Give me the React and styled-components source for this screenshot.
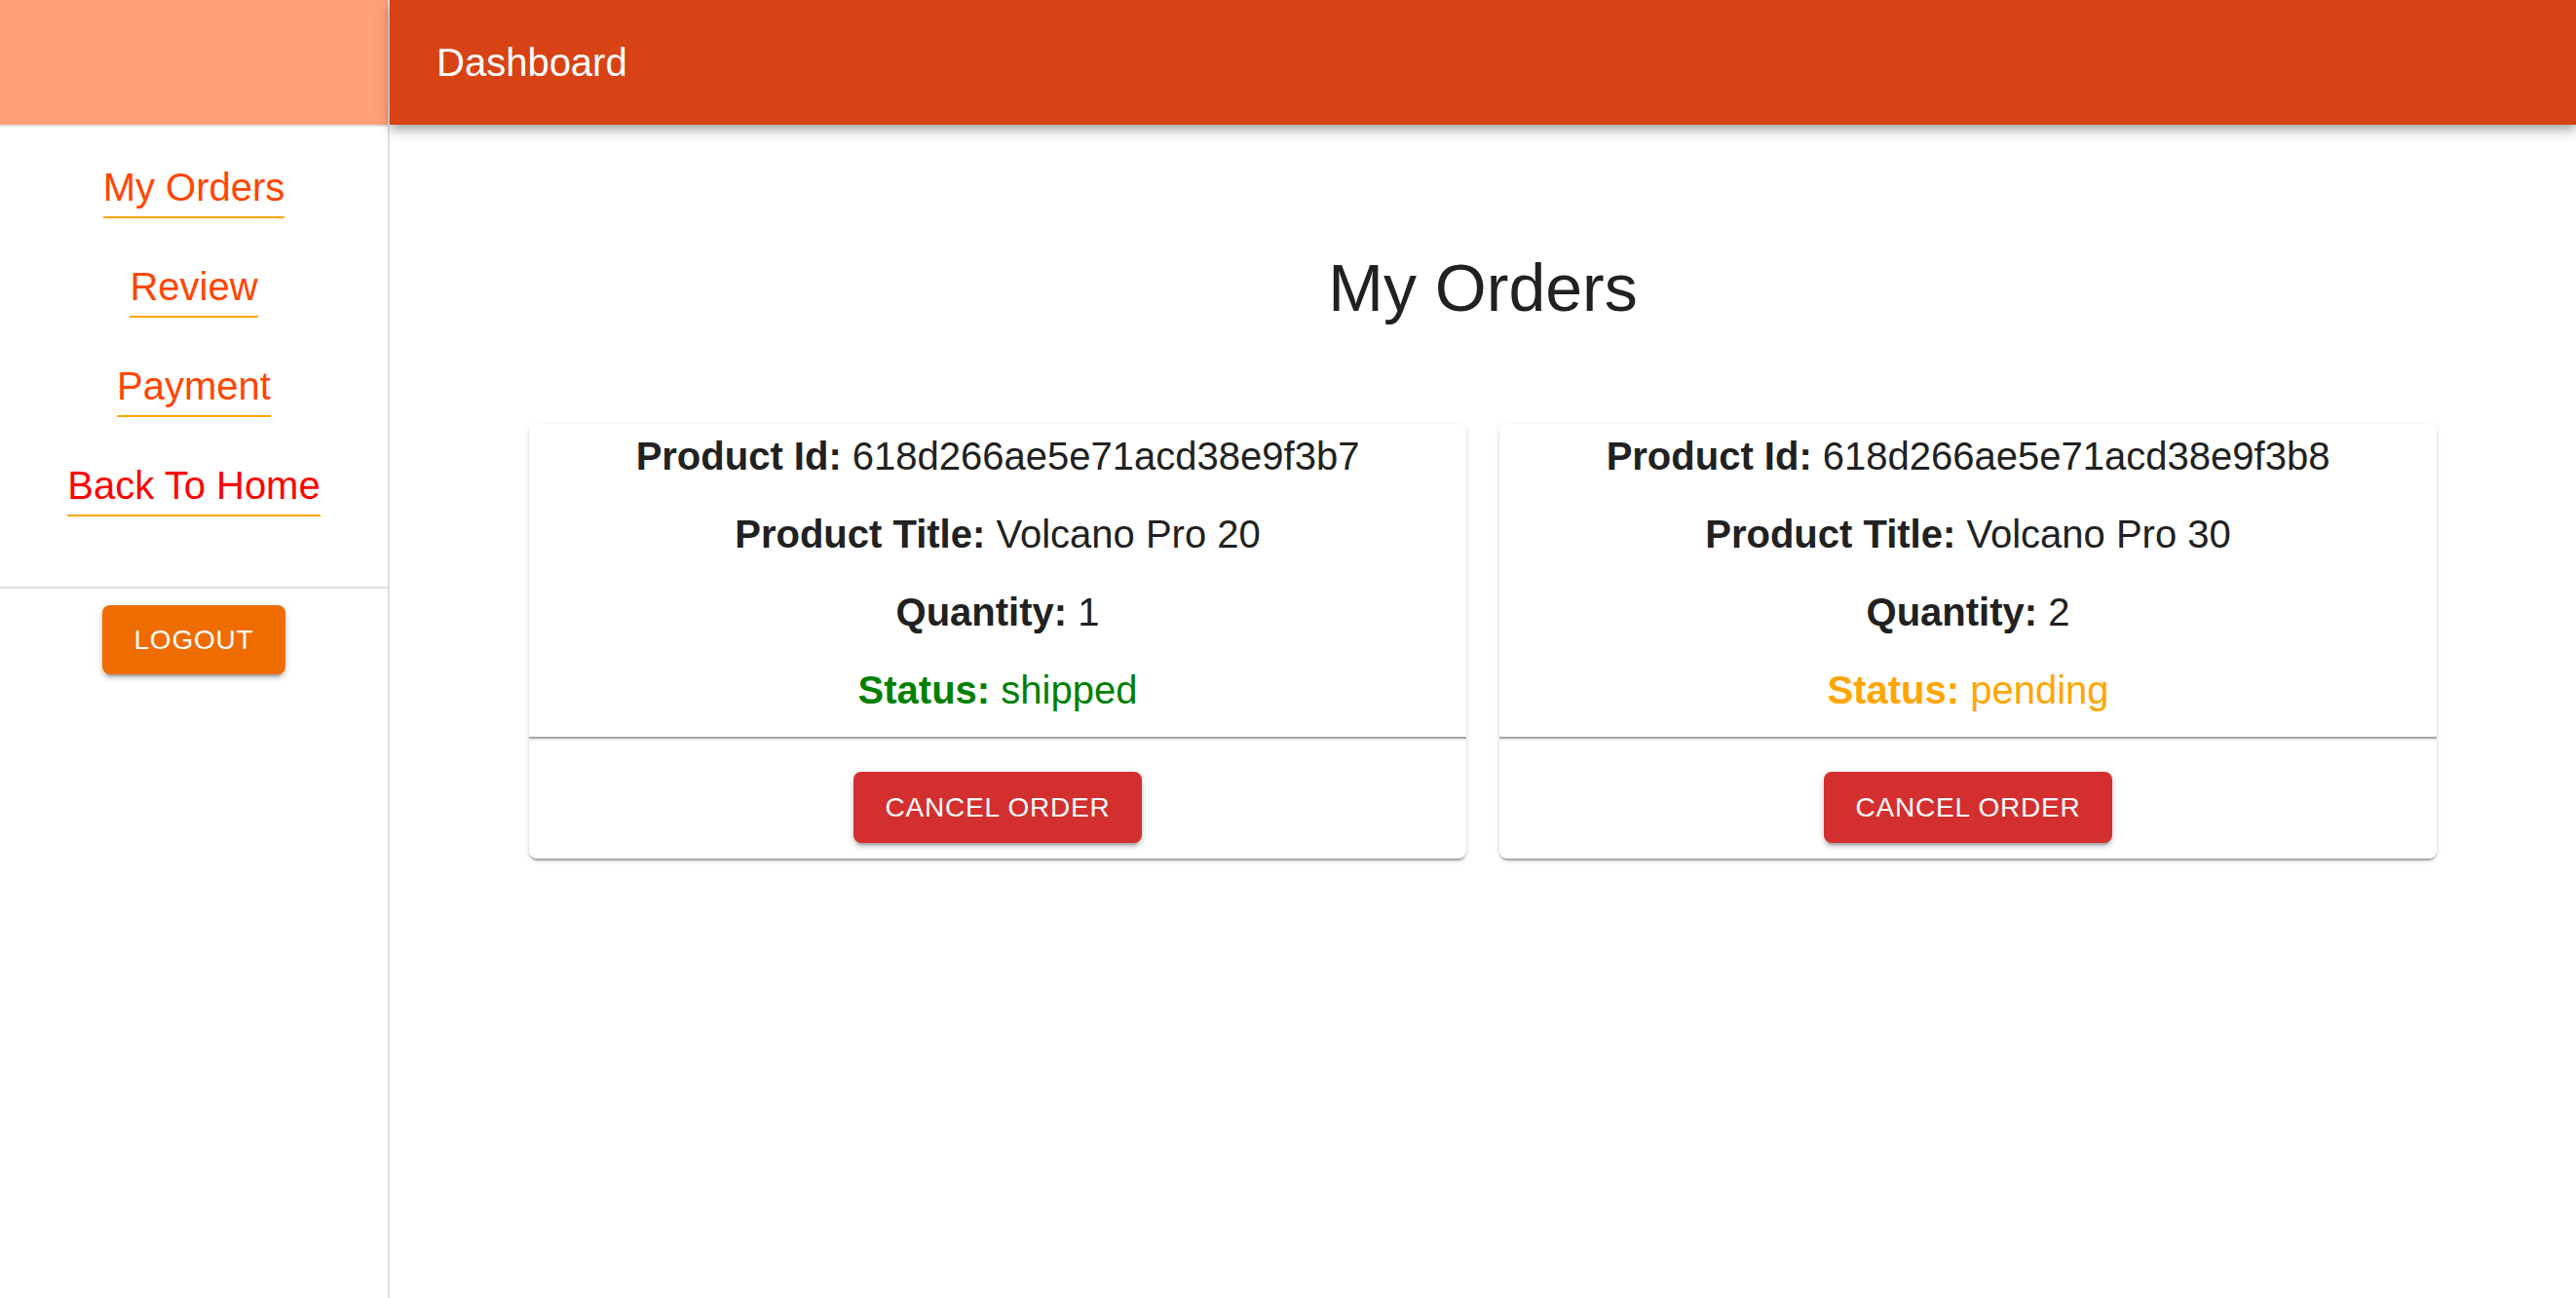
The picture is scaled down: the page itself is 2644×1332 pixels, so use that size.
import React from "react"
import styled, {createGlobalStyle} from "styled-components"

const orders = [
  {id: "618d266ae5e71acd38e9f3b7", title: "Volcano Pro 20", quantity: 1, status: "shipped"},
  {id: "618d266ae5e71acd38e9f3b8", title: "Volcano Pro 30", quantity: 2, status: "pending"},
]

const statusColors = {
  shipped: "#008000",
  pending: "#ffa500",
}

const GlobalStyle = createGlobalStyle`
  html, body {
    margin: 0;
    padding: 0;
    background: #ffffff;
  }
  body {
    font-family: "Liberation Sans", Arial, sans-serif;
    color: #212121;
  }
  * {
    box-sizing: border-box;
  }
`

const Layout = styled.div`
  display: flex;
  min-height: 100vh;
`

const Drawer = styled.aside`
  width: 400px;
  flex-shrink: 0;
  border-right: 2px solid #e0e0e0;
  display: flex;
  flex-direction: column;
`

const DrawerHead = styled.div`
  height: 130px;
  background: #ffa07a;
  border-bottom: 2px solid #e0e0e0;
`

const NavList = styled.nav`
  display: flex;
  flex-direction: column;
  align-items: center;
  gap: 40px;
  padding: 32px 0 72px;
  border-bottom: 2px solid #e0e0e0;
`

const NavLink = styled.a`
  font-size: 40px;
  line-height: 60px;
  color: ${p => p.$home ? "#ff0000" : "#ff4500"};
  text-decoration: none;
  border-bottom: 2px solid #ffa500;
  cursor: pointer;
`

const LogoutWrap = styled.div`
  display: flex;
  justify-content: center;
  padding-top: 17px;
`

const Button = styled.button`
  border: 0;
  border-radius: 8px;
  padding: 12px 32px;
  font-family: inherit;
  font-size: 28px;
  line-height: ${p => p.$small ? "47px" : "49px"};
  letter-spacing: 0.8px;
  text-transform: uppercase;
  color: #ffffff;
  background: ${p => p.$color};
  box-shadow: 0px 6px 2px -4px rgba(0,0,0,0.2), 0px 4px 4px 0px rgba(0,0,0,0.14), 0px 2px 10px 0px rgba(0,0,0,0.12);
  cursor: pointer;
`

const Main = styled.div`
  flex: 1;
  min-width: 0;
  display: flex;
  flex-direction: column;
`

const AppBar = styled.header`
  position: relative;
  z-index: 1;
  height: 128px;
  padding: 0 48px;
  display: flex;
  align-items: center;
  background: #d84315;
  color: #ffffff;
  box-shadow: 0px 4px 8px -2px rgba(0,0,0,0.2), 0px 8px 10px 0px rgba(0,0,0,0.14), 0px 2px 20px 0px rgba(0,0,0,0.12);
`

const BarTitle = styled.h1`
  margin: 0;
  font-size: 40px;
  font-weight: 400;
  line-height: 64px;
`

const Content = styled.main`
  padding: 125px 0 48px;
`

const PageTitle = styled.h2`
  margin: 0;
  font-size: 68px;
  font-weight: 400;
  line-height: 84px;
  text-align: center;
  color: #212121;
`

const CardGrid = styled.div`
  max-width: 1958px;
  margin: 98px auto 0;
  display: grid;
  grid-template-columns: 1fr 1fr;
  gap: 34px;
`

const Card = styled.div`
  background: #ffffff;
  border-radius: 8px;
  overflow: hidden;
  padding-top: 1px;
  box-shadow: 0px 4px 2px -2px rgba(0,0,0,0.2), 0px 2px 2px 0px rgba(0,0,0,0.14), 0px 2px 6px 0px rgba(0,0,0,0.12);
`

const Row = styled.p`
  margin: 0 0 16px;
  font-size: 40px;
  line-height: 64px;
  text-align: center;
  color: ${p => p.$color || "#212121"};
  &:last-of-type {
    margin-bottom: 0;
  }
  b {
    font-weight: 700;
  }
`

const Rule = styled.hr`
  margin: 16px 0 0;
  height: 0;
  border: 0;
  border-top: 2px solid #a6a6a6;
  border-bottom: 2px solid #ededed;
`

const Actions = styled.div`
  display: flex;
  justify-content: center;
  padding: 32px 16px 16px;
`

const OrderCard = ({order}) => (
  <Card>
    <Row><b>Product Id:</b> {order.id}</Row>
    <Row><b>Product Title:</b> {order.title}</Row>
    <Row><b>Quantity:</b> {order.quantity}</Row>
    <Row $color={statusColors[order.status]}><b>Status:</b> {order.status}</Row>
    <Rule />
    <Actions>
      <Button $color="#d32f2f">Cancel Order</Button>
    </Actions>
  </Card>
)

export default function App() {
  return (
    <>
      <GlobalStyle />
      <Layout>
        <Drawer>
          <DrawerHead />
          <NavList>
            <NavLink>My Orders</NavLink>
            <NavLink>Review</NavLink>
            <NavLink>Payment</NavLink>
            <NavLink $home>Back To Home</NavLink>
          </NavList>
          <LogoutWrap>
            <Button $color="#ef6c00" $small>Logout</Button>
          </LogoutWrap>
        </Drawer>
        <Main>
          <AppBar>
            <BarTitle>Dashboard</BarTitle>
          </AppBar>
          <Content>
            <PageTitle>My Orders</PageTitle>
            <CardGrid>
              {orders.map(o => <OrderCard key={o.id} order={o} />)}
            </CardGrid>
          </Content>
        </Main>
      </Layout>
    </>
  )
}
